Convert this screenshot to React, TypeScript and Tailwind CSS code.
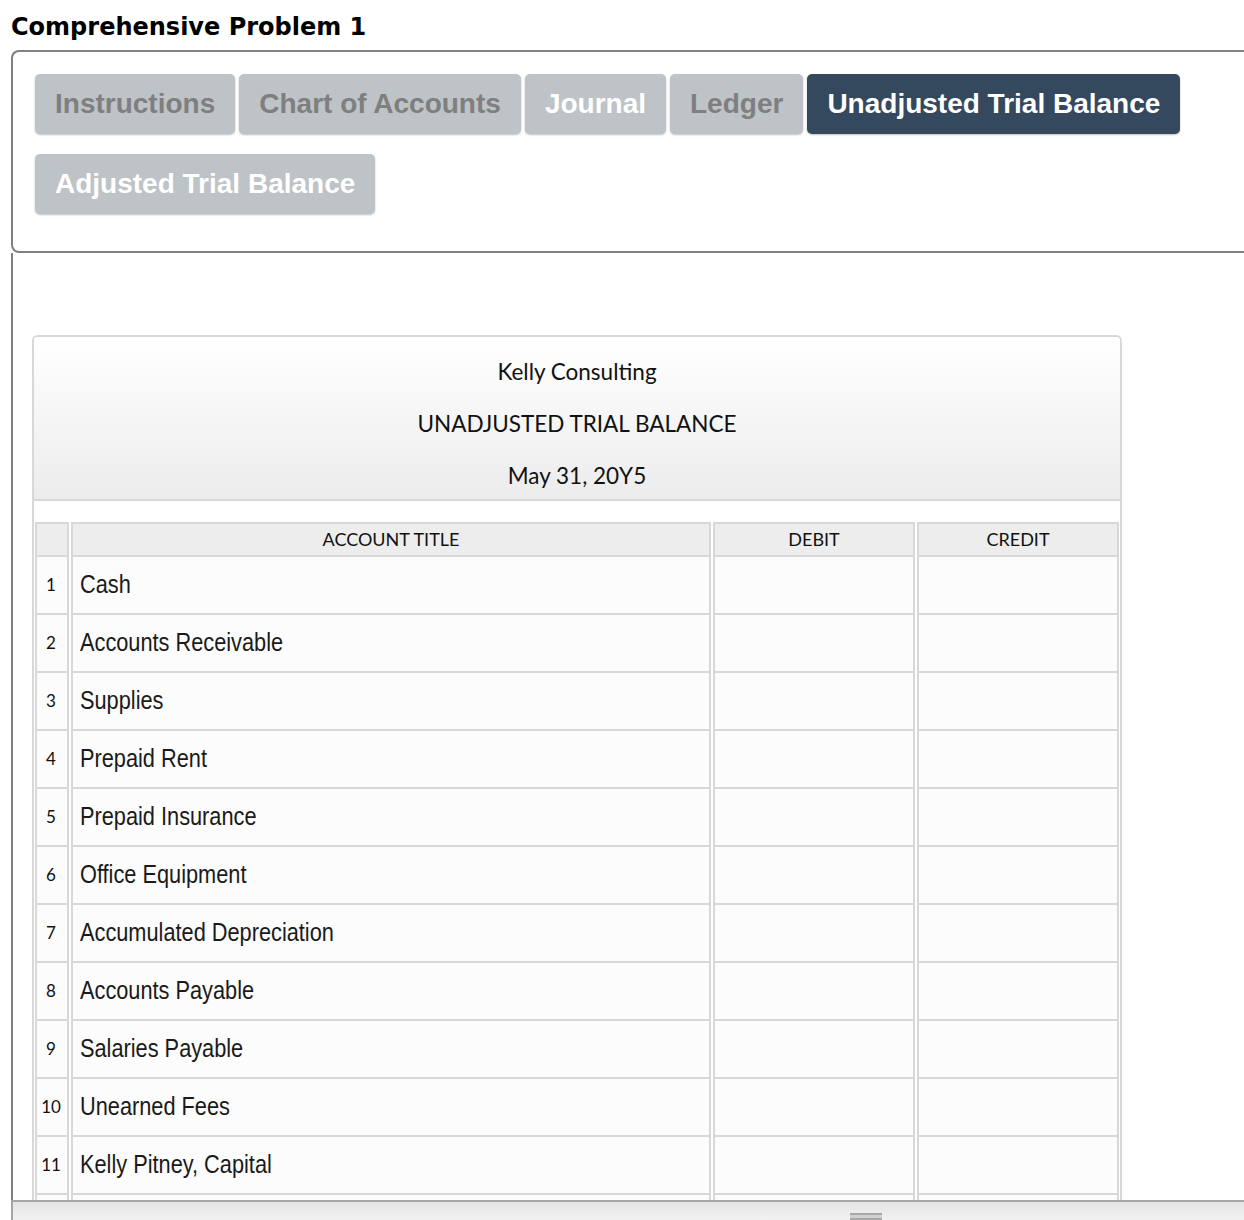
import React from 'react'

const TABS = [
  { label: 'Instructions', text: 'text-[#7f7f7f]' },
  { label: 'Chart of Accounts', text: 'text-[#7f7f7f]' },
  { label: 'Journal', text: 'text-white' },
  { label: 'Ledger', text: 'text-[#7f7f7f]' },
  { label: 'Unadjusted Trial Balance', text: 'text-white', active: true },
]

const ACCOUNTS = [
  'Cash',
  'Accounts Receivable',
  'Supplies',
  'Prepaid Rent',
  'Prepaid Insurance',
  'Office Equipment',
  'Accumulated Depreciation',
  'Accounts Payable',
  'Salaries Payable',
  'Unearned Fees',
  'Kelly Pitney, Capital',
  'Kelly Pitney, Drawing',
  'Fees Earned',
  'Salary Expense',
]

const sans = "font-['Lato','Open_Sans',sans-serif]"

function Tab({ label, text, active }: { label: string; text: string; active?: boolean }) {
  return (
    <div
      className={`h-[60px] px-[20px] flex items-center rounded-[5px] shadow-[0_1px_2px_rgba(0,0,0,0.25)] text-[28px] font-bold whitespace-nowrap font-['Liberation_Sans',Arial,sans-serif] ${
        active ? 'bg-[#34495e] text-white' : `bg-[#bdc3c7] ${text}`
      }`}
    >
      {label}
    </div>
  )
}

export default function App() {
  return (
    <div className="h-[1220px] w-[1244px] flex flex-col overflow-hidden bg-white text-black">
      <h1 className="pl-[11px] pt-[13px] leading-[28px] text-[24px] font-bold font-['DejaVu_Sans',Verdana,sans-serif]">
        Comprehensive Problem 1
      </h1>

      {/* tab box */}
      <div className="mt-[9px] ml-[11px] border-2 border-r-0 border-[#808080] rounded-l-[8px] pt-[22px] pl-[22px] pb-[37px]">
        <div className="flex flex-col gap-[20px]">
          <div className="flex gap-[4px]">
            {TABS.map(t => <Tab key={t.label} {...t} />)}
          </div>
          <div className="flex">
            <Tab label="Adjusted Trial Balance" text="text-white" />
          </div>
        </div>
      </div>

      {/* content */}
      <div className="flex-1 min-h-0 overflow-hidden ml-[11px] border-l-2 border-[#808080]">
        <div className="mt-[82px] ml-[19px] w-[1090px] border-2 border-[#d8d8d8] rounded-t-[6px] bg-white">
          <div className={`h-[164px] pt-[9px] border-b-2 border-[#d8d8d8] bg-linear-to-b from-[#ffffff] to-[#ececec] rounded-t-[4px] text-center text-[22.5px] leading-[52px] text-[#111] ${sans}`}>
            <div>Kelly Consulting</div>
            <div>UNADJUSTED TRIAL BALANCE</div>
            <div>May 31, 20Y5</div>
          </div>

          <table className="mt-[21px] -ml-[1px] w-[1088px] table-fixed border-separate border-spacing-x-[2px] border-spacing-y-0">
            <colgroup>
              <col className="w-[34px]" />
              <col />
              <col className="w-[202px]" />
              <col className="w-[202px]" />
            </colgroup>
            <thead>
              <tr className={`${sans} text-[18px] font-normal text-[#111]`}>
                <th className="h-[35px] border-2 border-[#d8d8d8] bg-[#ededed]" />
                <th className="h-[35px] border-2 border-[#d8d8d8] bg-[#ededed] font-normal">ACCOUNT TITLE</th>
                <th className="h-[35px] border-2 border-[#d8d8d8] bg-[#ededed] font-normal">DEBIT</th>
                <th className="h-[35px] border-2 border-[#d8d8d8] bg-[#ededed] font-normal">CREDIT</th>
              </tr>
            </thead>
            <tbody>
              {ACCOUNTS.map((name, i) => (
                <tr key={name}>
                  <td className={`h-[58px] border-x-2 border-b-2 border-[#d8d8d8] bg-[#fcfcfc] pr-[2px] text-center text-[17px] text-[#111] ${sans}`}>
                    {i + 1}
                  </td>
                  <td className="h-[58px] border-x-2 border-b-2 border-[#d8d8d8] bg-[#fcfcfc] pl-[7px] text-[25px] text-[#1a1a1a] font-['Liberation_Sans',Arial,sans-serif] whitespace-nowrap">
                    <span className="inline-block origin-left scale-x-[0.87]">{name}</span>
                  </td>
                  <td className="h-[58px] border-x-2 border-b-2 border-[#d8d8d8] bg-[#fcfcfc]" />
                  <td className="h-[58px] border-x-2 border-b-2 border-[#d8d8d8] bg-[#fcfcfc]" />
                </tr>
              ))}
            </tbody>
          </table>
        </div>
      </div>

      {/* bottom resize bar */}
      <div className="h-[20px] shrink-0 ml-[11px] border-t-2 border-l-2 border-[#a6a6a6] bg-linear-to-b from-[#e4e4e4] to-[#f2f2f2] flex items-end justify-center pl-[474px]">
        <div className="w-[32px] h-[7px] border-t-2 border-b-2 border-[#a8a8a8] bg-[#d0d0d0]" />
      </div>
    </div>
  )
}
